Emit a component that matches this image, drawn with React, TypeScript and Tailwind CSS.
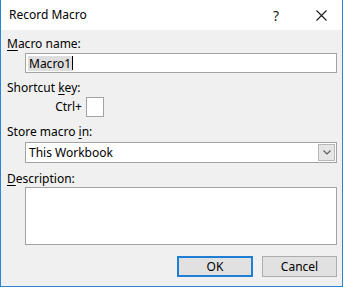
import React from 'react';

const font = { fontFamily: '"Noto Sans", "Open Sans", Arial, sans-serif' };

function Label({ children, className = '' }: { children: React.ReactNode; className?: string }) {
  return <div className={`h-[16px] leading-[16px] text-[12px] text-black ${className}`}>{children}</div>;
}

export default function App() {
  return (
    <div className="w-[344px] h-[288px] bg-white" style={font}>
      <div className="w-[343px] h-[287px] border-x border-b border-[#2b84d8] bg-[#f0f0f0] flex flex-col">
        {/* Title bar */}
        <div className="h-[30px] bg-white flex items-center shrink-0">
          <span className="ml-[8px] text-[12px] text-black">Record Macro</span>
          <span className="ml-auto mr-[37px] text-[14px] text-[#222]">?</span>
          <svg width="11" height="11" viewBox="0 0 11 11" className="mr-[15px]">
            <path d="M0.5 0.5 L10.5 10.5 M10.5 0.5 L0.5 10.5" stroke="#1a1a1a" strokeWidth="1.1" />
          </svg>
        </div>

        {/* Body */}
        <div className="flex flex-col pl-[6px]">
          <Label className="mt-[6px]">
            <span className="underline underline-offset-2">M</span>acro name:
          </Label>
          <div className="mt-[1px] ml-[18px] w-[312px] h-[20px] border border-[#a3a3a3] bg-white flex items-center pl-[2px]">
            <span className="bg-[#dedede] text-[12px] leading-[15px] px-[1px] text-black">Macro1</span>
            <span className="w-px h-[14px] bg-black" />
          </div>

          <Label className="mt-[7px]">
            Shortcut <span className="underline underline-offset-2">k</span>ey:
          </Label>
          <div className="mt-[1px] flex items-center">
            <div className="w-[79px] pr-[4px] text-right text-[12px] text-black">Ctrl+</div>
            <div className="w-[18px] h-[20px] border border-[#a3a3a3] bg-white" />
          </div>

          <Label className="mt-[7px]">
            Store macro <span className="underline underline-offset-2">i</span>n:
          </Label>
          <div className="mt-[2px] ml-[18px] w-[312px] h-[21px] border border-[#a3a3a3] bg-white flex items-center">
            <span className="ml-[3px] text-[12px] text-black">This Workbook</span>
            <div className="ml-auto mr-px w-[17px] h-[17px] border border-[#b8b8b8] bg-[#e6e6e6] flex items-center justify-center">
              <svg width="8" height="5" viewBox="0 0 8 5">
                <path d="M0.5 0.5 L4 4 L7.5 0.5" fill="none" stroke="#5a5a5a" strokeWidth="1.1" />
              </svg>
            </div>
          </div>

          <Label className="mt-[8px]">
            <span className="underline underline-offset-2">D</span>escription:
          </Label>
          <div className="ml-[18px] w-[312px] h-[58px] border border-[#a3a3a3] bg-white" />

          <div className="mt-[11px] ml-[170px] flex gap-[9px]">
            <button className="w-[76px] h-[21px] border-2 border-[#1f7fd4] bg-[#e1e1e1] text-[12px] text-black leading-none">
              OK
            </button>
            <button className="w-[75px] h-[21px] border border-[#adadad] bg-[#e1e1e1] text-[12px] text-black leading-none">
              Cancel
            </button>
          </div>
        </div>
      </div>
    </div>
  );
}
